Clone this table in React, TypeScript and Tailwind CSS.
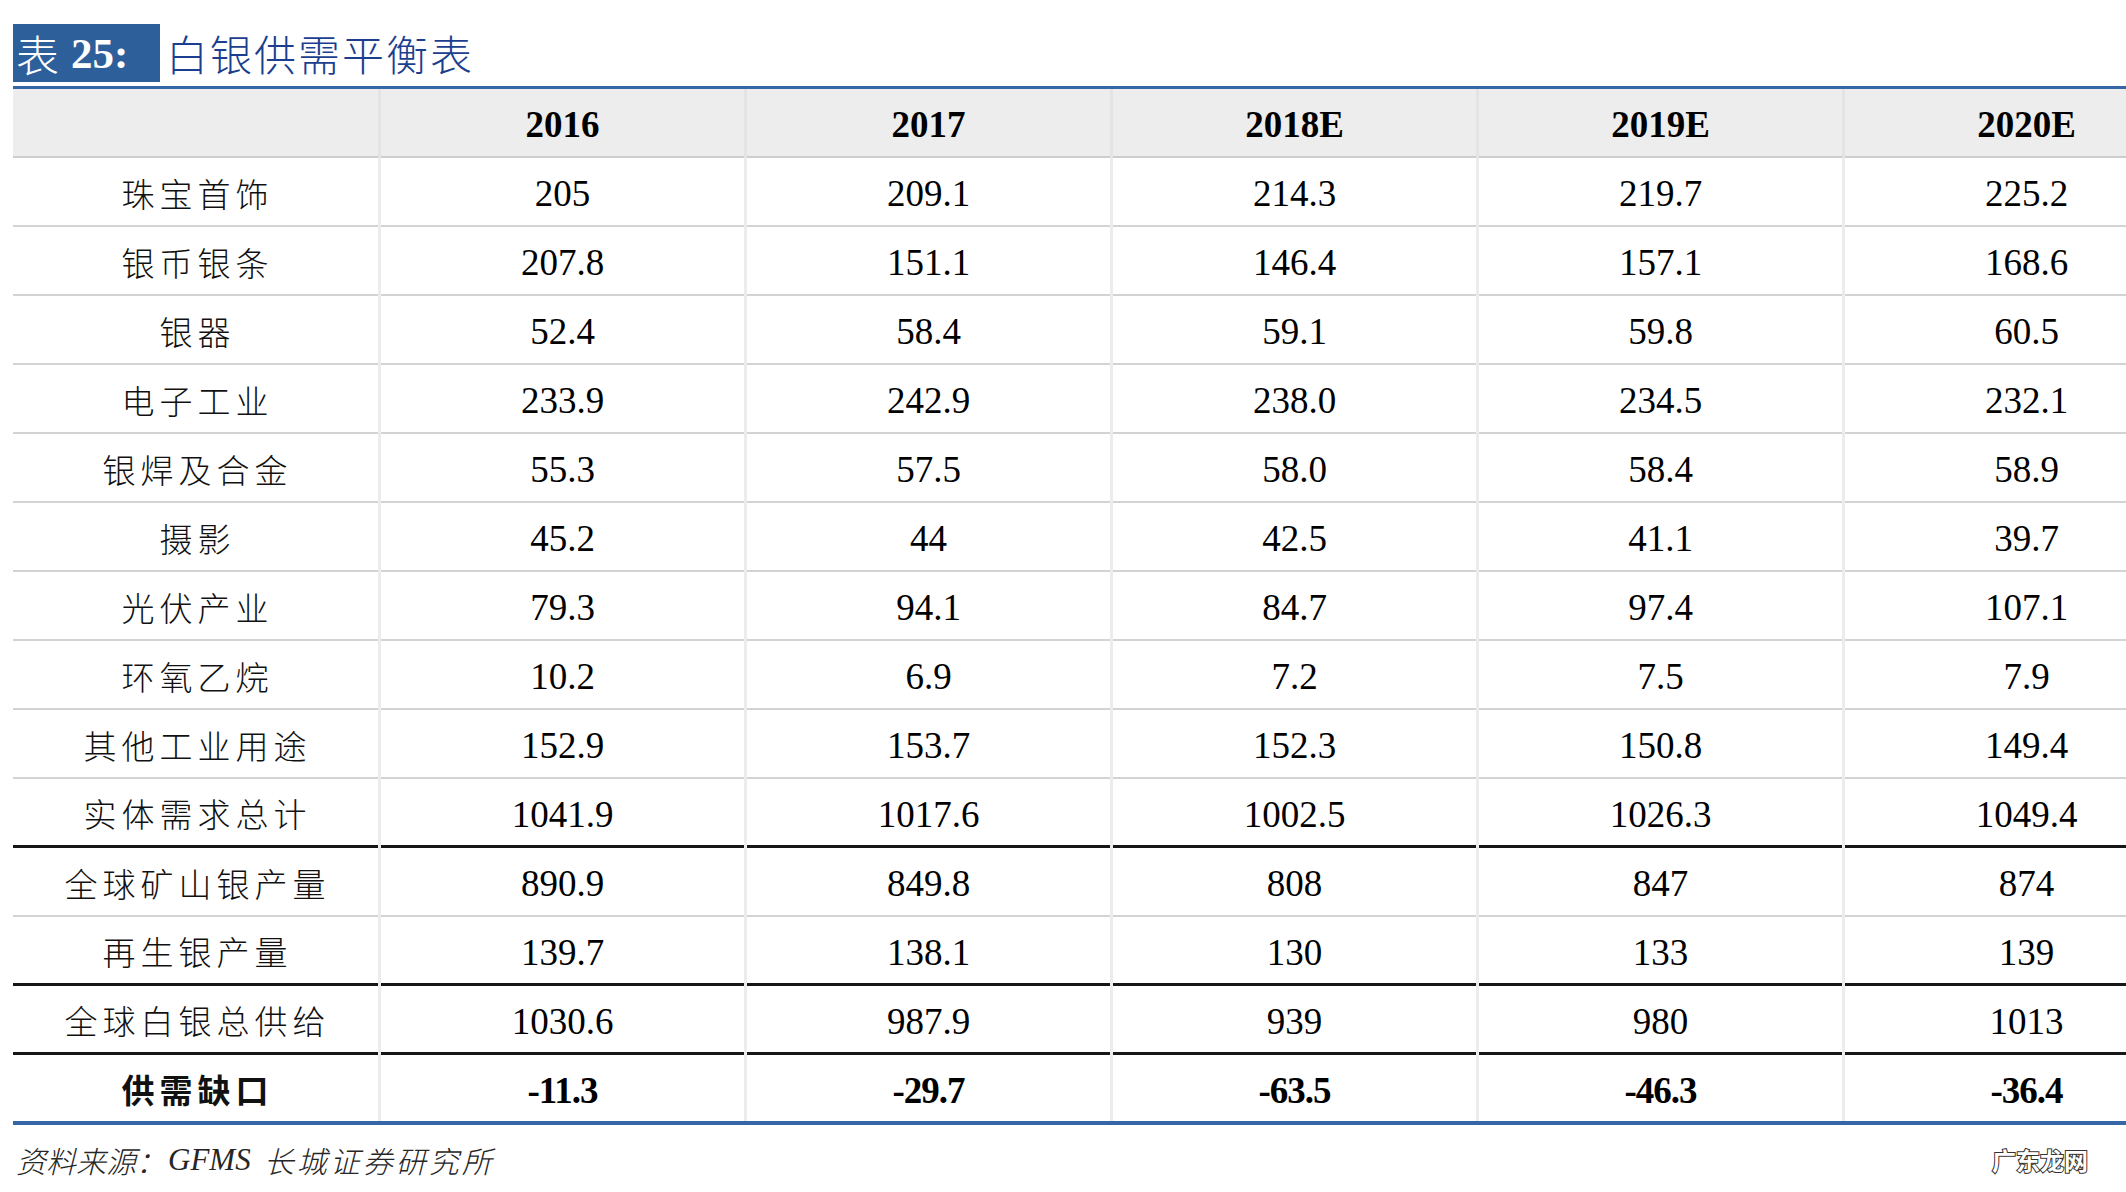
const years = ['2016', '2017', '2018E', '2019E', '2020E']

const rows: { label: string; values: string[]; line: 'grey' | 'black' | 'none'; bold?: boolean }[] = [
  { label: '珠宝首饰', values: ['205', '209.1', '214.3', '219.7', '225.2'], line: 'grey' },
  { label: '银币银条', values: ['207.8', '151.1', '146.4', '157.1', '168.6'], line: 'grey' },
  { label: '银器', values: ['52.4', '58.4', '59.1', '59.8', '60.5'], line: 'grey' },
  { label: '电子工业', values: ['233.9', '242.9', '238.0', '234.5', '232.1'], line: 'grey' },
  { label: '银焊及合金', values: ['55.3', '57.5', '58.0', '58.4', '58.9'], line: 'grey' },
  { label: '摄影', values: ['45.2', '44', '42.5', '41.1', '39.7'], line: 'grey' },
  { label: '光伏产业', values: ['79.3', '94.1', '84.7', '97.4', '107.1'], line: 'grey' },
  { label: '环氧乙烷', values: ['10.2', '6.9', '7.2', '7.5', '7.9'], line: 'grey' },
  { label: '其他工业用途', values: ['152.9', '153.7', '152.3', '150.8', '149.4'], line: 'grey' },
  { label: '实体需求总计', values: ['1041.9', '1017.6', '1002.5', '1026.3', '1049.4'], line: 'black' },
  { label: '全球矿山银产量', values: ['890.9', '849.8', '808', '847', '874'], line: 'grey' },
  { label: '再生银产量', values: ['139.7', '138.1', '130', '133', '139'], line: 'black' },
  { label: '全球白银总供给', values: ['1030.6', '987.9', '939', '980', '1013'], line: 'black' },
  { label: '供需缺口', values: ['-11.3', '-29.7', '-63.5', '-46.3', '-36.4'], line: 'none', bold: true },
]

const serif = "font-['Liberation_Serif','Times_New_Roman',serif]"
const cjk = "font-['Noto_Sans_CJK_SC',sans-serif]"

export default function App() {
  return (
    <div className="w-[2126px] h-[1192px] overflow-hidden bg-white relative">
      {/* TITLE */}
      <div className="flex items-center pt-[24px] pl-[13px] h-[82px]">
        <div className="h-[58px] w-[147px] bg-[#2d5f9b] flex items-center pl-[3px] text-white text-[43px] leading-none">
          <span className={`${cjk} font-extralight`}>表</span>
          <span className={`${serif} font-bold ml-[12px]`}>25:</span>
        </div>
        <div className={`${cjk} font-light text-[42px] leading-none tracking-[2px] text-[#1b3f8e] ml-[6px]`}>白银供需平衡表</div>
      </div>

      {/* TABLE */}
      <div className="mt-[4px] ml-[13px] w-[2220px] border-t-[3px] border-b-4 border-[#3566a6]">
        <div className="grid grid-cols-[365px_363px_363px_363px_363px_363px] gap-x-[3px] bg-[#e4e4e4]">
          <div className="h-[69px] bg-[#ededed] border-b-2 border-[#cdcdcd]" />
          {years.map((y) => (
            <div key={y} className={`h-[69px] pt-[5px] bg-[#ededed] border-b-2 border-[#cdcdcd] flex items-center justify-center ${serif} font-bold text-[37px] text-black`}>
              {y}
            </div>
          ))}
        </div>

        {rows.map((r) => {
          const line =
            r.line === 'grey'
              ? 'border-b-2 border-[#d3d3d3]'
              : r.line === 'black'
              ? 'border-b-[3px] border-[#161616]'
              : ''
          const h = r.line === 'none' ? 'h-[66px]' : 'h-[69px]'
          return (
            <div key={r.label} className="grid grid-cols-[365px_363px_363px_363px_363px_363px] gap-x-[3px] bg-[#ececec]">
              <div className={`${h} pt-[4px] bg-white ${line} flex items-center justify-center pl-[4px] ${cjk} text-[33px] tracking-[5px] text-[#111] ${r.bold ? 'font-bold' : 'font-extralight'}`}>
                {r.label}
              </div>
              {r.values.map((v, i) => (
                <div key={i} className={`${h} pt-[5px] bg-white ${line} flex items-center justify-center ${serif} text-[37px] text-black ${r.bold ? 'font-bold tracking-[-1px]' : ''}`}>
                  {v}
                </div>
              ))}
            </div>
          )
        })}
      </div>

      {/* SOURCE */}
      <div className="flex items-center justify-between pl-[16px] pr-[38px] mt-[19px]">
        <div className="italic text-[30px] leading-none text-[#262626] flex items-center">
          <span className={`${cjk} font-extralight`}>资料来源：</span>
          <span className={`${serif} text-[31px] ml-[2px]`}>GFMS</span>
          <span className={`${cjk} font-extralight ml-[13px] tracking-[3px]`}>长城证券研究所</span>
        </div>
        <div className={`${cjk} font-bold text-[24px] leading-none text-white [-webkit-text-stroke:2px_#333] [paint-order:stroke_fill]`}>
          广东龙网
        </div>
      </div>
    </div>
  )
}
